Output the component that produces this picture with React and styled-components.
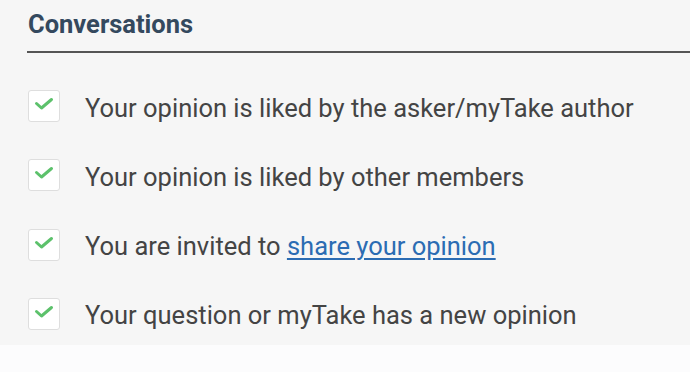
import React from "react";
import styled, { createGlobalStyle } from "styled-components";

const Global = createGlobalStyle`
  html, body { margin: 0; padding: 0; background: #fcfcfd; }
  body { font-family: Roboto, "Noto Sans", sans-serif; }
`;

const Panel = styled.section`
  background: #f6f6f6;
  height: 345px;
  padding: 7px 0 0 27px;
  box-sizing: border-box;
`;

const Title = styled.h2`
  margin: 0;
  font-size: 25.5px;
  font-weight: 700;
  color: #34495e;
  line-height: 34px;
  padding-left: 1px;
  padding-bottom: 10px;
  border-bottom: 2px solid #555;
`;

const List = styled.ul`
  list-style: none;
  margin: 0;
  padding: 37px 0 0 1px;
  display: flex;
  flex-direction: column;
  gap: 37.3px;
`;

const Row = styled.li`
  display: flex;
  align-items: center;
  gap: 25px;
  height: 32px;
`;

const Box = styled.span`
  width: 32px;
  height: 32px;
  box-sizing: border-box;
  border: 1px solid #dedede;
  border-radius: 3px;
  background: #fff;
  display: flex;
  align-items: center;
  justify-content: center;
  flex: none;
`;

const Label = styled.span`
  font-size: 25.5px;
  color: #444;
  padding-top: 3px;
`;

const Link = styled.a`
  color: #2b6cb3;
  text-decoration: underline;
  text-underline-offset: 3px;
`;

const Check = () => (
  <svg width="20" height="14" viewBox="0 0 20 14" style={{ marginTop: -4 }}>
    <path d="M2.5 6.5 L7.5 11 L17.5 2.5" fill="none" stroke="#5cc16b" strokeWidth="3" strokeLinecap="round" strokeLinejoin="round" />
  </svg>
);

const items = [
  <>Your opinion is liked by the asker/myTake author</>,
  <>Your opinion is liked by other members</>,
  <>You are invited to <Link href="#">share your opinion</Link></>,
  <>Your question or myTake has a new opinion</>,
];

export default function App() {
  return (
    <>
      <Global />
      <Panel>
        <Title>Conversations</Title>
        <List>
          {items.map((c, i) => (
            <Row key={i}>
              <Box><Check /></Box>
              <Label>{c}</Label>
            </Row>
          ))}
        </List>
      </Panel>
    </>
  );
}
